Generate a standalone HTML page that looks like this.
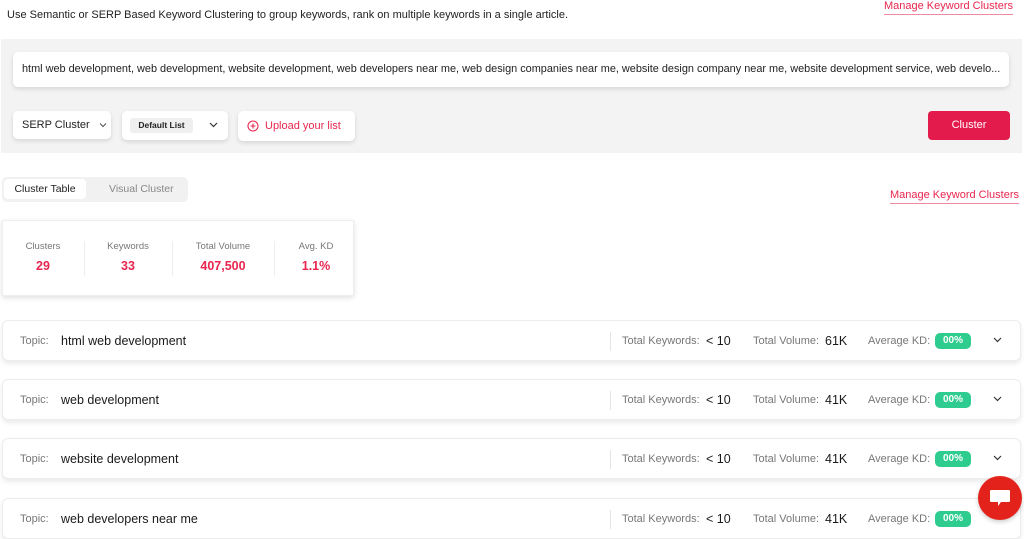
<!DOCTYPE html>
<html><head><meta charset="utf-8"><style>
*{box-sizing:border-box;margin:0;padding:0}
body{width:1024px;height:535px;overflow:hidden;background:#fff;font-family:"Liberation Sans",sans-serif;color:#222;position:relative}
.a{position:absolute}
.link{color:#e8264f;font-size:11px;border-bottom:1px solid #f08aa0;padding-bottom:2px}
.card{background:#fff;border-radius:5px;box-shadow:0 2px 5px rgba(0,0,0,.12)}
.row{position:absolute;left:2px;width:1019px;height:41px;background:#fff;border:1px solid #ececec;border-radius:6px;box-shadow:0 3px 5px rgba(0,0,0,.08);font-size:11px}
.row span{position:absolute;top:0;line-height:40px}
.g{color:#777}
.b{color:#1a1a1a;font-size:12.5px}
.kd{position:absolute;left:932px;top:12px;width:36px;height:16px;background:#2ecc8f;border-radius:5px;color:#fff;font-size:10px;font-weight:bold;text-align:center;line-height:16px}
.sep{position:absolute;left:607px;top:11px;width:1px;height:19px;background:#e4e4e4}
.chev{position:absolute;left:990px;top:16px}
.st{position:absolute;top:20px;text-align:center;width:80px}
.st .l{font-size:9.5px;color:#777}
.st .v{font-size:12.5px;color:#e8264f;font-weight:bold;margin-top:7px}
</style></head><body>
<div class="a" style="left:7px;top:9px;font-size:11px;color:#222">Use Semantic or SERP Based Keyword Clustering to group keywords, rank on multiple keywords in a single article.</div>
<div class="a link" style="left:884px;top:0px">Manage Keyword Clusters</div>
<div class="a" style="left:1px;top:39px;width:1021px;height:114px;background:#f3f3f3"></div>
<div class="a card" style="left:13px;top:52px;width:996px;height:35px;font-size:10.9px;line-height:35px;padding-left:9px;color:#222;white-space:nowrap;overflow:hidden">html web development, web development, website development, web developers near me, web design companies near me, website design company near me, website development service, web develo...</div>
<div class="a card" style="left:13px;top:111px;width:98px;height:28px;font-size:11px;line-height:28px;padding-left:9px">SERP Cluster <svg width="8" height="6" style="margin-left:6px" viewBox="0 0 8 6"><path d="M1 1.5l3 3 3-3" stroke="#555" fill="none" stroke-width="1.1"/></svg></div>
<div class="a card" style="left:122px;top:111px;width:106px;height:29px">
<div class="a" style="left:8px;top:7px;width:63px;height:15px;background:#efefef;border-radius:3px;font-size:8.5px;font-weight:bold;line-height:15px;text-align:center">Default List</div>
<svg class="a" style="left:87px;top:11px" width="9" height="6" viewBox="0 0 9 6"><path d="M1 1l3.5 3.5L8 1" stroke="#333" fill="none" stroke-width="1.2"/></svg></div>
<div class="a card" style="left:238px;top:111px;width:117px;height:30px;font-size:11px;color:#e8264f;line-height:30px;padding-left:27px">
<svg class="a" style="left:9px;top:9px" width="12" height="12" viewBox="0 0 12 12"><circle cx="6" cy="6" r="5" stroke="#e8264f" fill="none" stroke-width="1.1"/><path d="M6 3.5v5M3.5 6h5" stroke="#e8264f" stroke-width="1.1"/></svg>Upload your list</div>
<div class="a" style="left:928px;top:111px;width:82px;height:29px;background:#e31b4c;border-radius:4px;color:#fff;font-size:11px;text-align:center;line-height:29px">Cluster</div>
<div class="a" style="left:2px;top:177px;width:186px;height:25px;background:#f1f1f1;border-radius:5px"></div>
<div class="a" style="left:4px;top:179px;width:82px;height:20px;background:#fff;border-radius:4px;font-size:10.5px;line-height:20px;text-align:center;color:#222">Cluster Table</div>
<div class="a" style="left:109px;top:179px;font-size:10.5px;line-height:20px;color:#888">Visual Cluster</div>
<div class="a link" style="left:890px;top:189px">Manage Keyword Clusters</div>
<div class="a" style="left:2px;top:220px;width:352px;height:76px;background:#fff;border:1px solid #eee;box-shadow:0 2px 5px rgba(0,0,0,.12)">
<div class="st" style="left:0"><div class="l">Clusters</div><div class="v">29</div></div>
<div class="st" style="left:85px"><div class="l">Keywords</div><div class="v">33</div></div>
<div class="st" style="left:180px"><div class="l">Total Volume</div><div class="v">407,500</div></div>
<div class="st" style="left:273px"><div class="l">Avg. KD</div><div class="v">1.1%</div></div>
<div class="a" style="left:81px;top:20px;width:1px;height:35px;background:#eee"></div>
<div class="a" style="left:169px;top:20px;width:1px;height:35px;background:#eee"></div>
<div class="a" style="left:271px;top:20px;width:1px;height:35px;background:#eee"></div>
</div>
<div class="row" style="top:320px"><span class="g" style="left:17px">Topic:</span><span class="b" style="left:58px">html web development</span><div class="sep"></div><span class="g" style="left:619px">Total Keywords:</span><span class="b" style="left:703px">&lt; 10</span><span class="g" style="left:750px">Total Volume:</span><span class="b" style="left:822px">61K</span><span class="g" style="left:865px">Average KD:</span><div class="kd">00%</div><svg class="chev" width="9" height="6" viewBox="0 0 9 6"><path d="M1 1l3.5 3.5L8 1" stroke="#333" fill="none" stroke-width="1.2"/></svg></div>
<div class="row" style="top:379px"><span class="g" style="left:17px">Topic:</span><span class="b" style="left:58px">web development</span><div class="sep"></div><span class="g" style="left:619px">Total Keywords:</span><span class="b" style="left:703px">&lt; 10</span><span class="g" style="left:750px">Total Volume:</span><span class="b" style="left:822px">41K</span><span class="g" style="left:865px">Average KD:</span><div class="kd">00%</div><svg class="chev" width="9" height="6" viewBox="0 0 9 6"><path d="M1 1l3.5 3.5L8 1" stroke="#333" fill="none" stroke-width="1.2"/></svg></div>
<div class="row" style="top:438px"><span class="g" style="left:17px">Topic:</span><span class="b" style="left:58px">website development</span><div class="sep"></div><span class="g" style="left:619px">Total Keywords:</span><span class="b" style="left:703px">&lt; 10</span><span class="g" style="left:750px">Total Volume:</span><span class="b" style="left:822px">41K</span><span class="g" style="left:865px">Average KD:</span><div class="kd">00%</div><svg class="chev" width="9" height="6" viewBox="0 0 9 6"><path d="M1 1l3.5 3.5L8 1" stroke="#333" fill="none" stroke-width="1.2"/></svg></div>
<div class="row" style="top:498px"><span class="g" style="left:17px">Topic:</span><span class="b" style="left:58px">web developers near me</span><div class="sep"></div><span class="g" style="left:619px">Total Keywords:</span><span class="b" style="left:703px">&lt; 10</span><span class="g" style="left:750px">Total Volume:</span><span class="b" style="left:822px">41K</span><span class="g" style="left:865px">Average KD:</span><div class="kd">00%</div></div>
<div class="a" style="left:978px;top:476px;width:44px;height:44px;border-radius:50%;background:#e3231b;box-shadow:0 2px 4px rgba(0,0,0,.2)">
<svg class="a" style="left:11px;top:13px" width="22" height="19" viewBox="0 0 22 19"><path d="M2 1h18a1 1 0 0 1 1 1v10a1 1 0 0 1-1 1H12l-3 4v-4H2a1 1 0 0 1-1-1V2a1 1 0 0 1 1-1z" fill="#fff"/></svg></div>
</body></html>
